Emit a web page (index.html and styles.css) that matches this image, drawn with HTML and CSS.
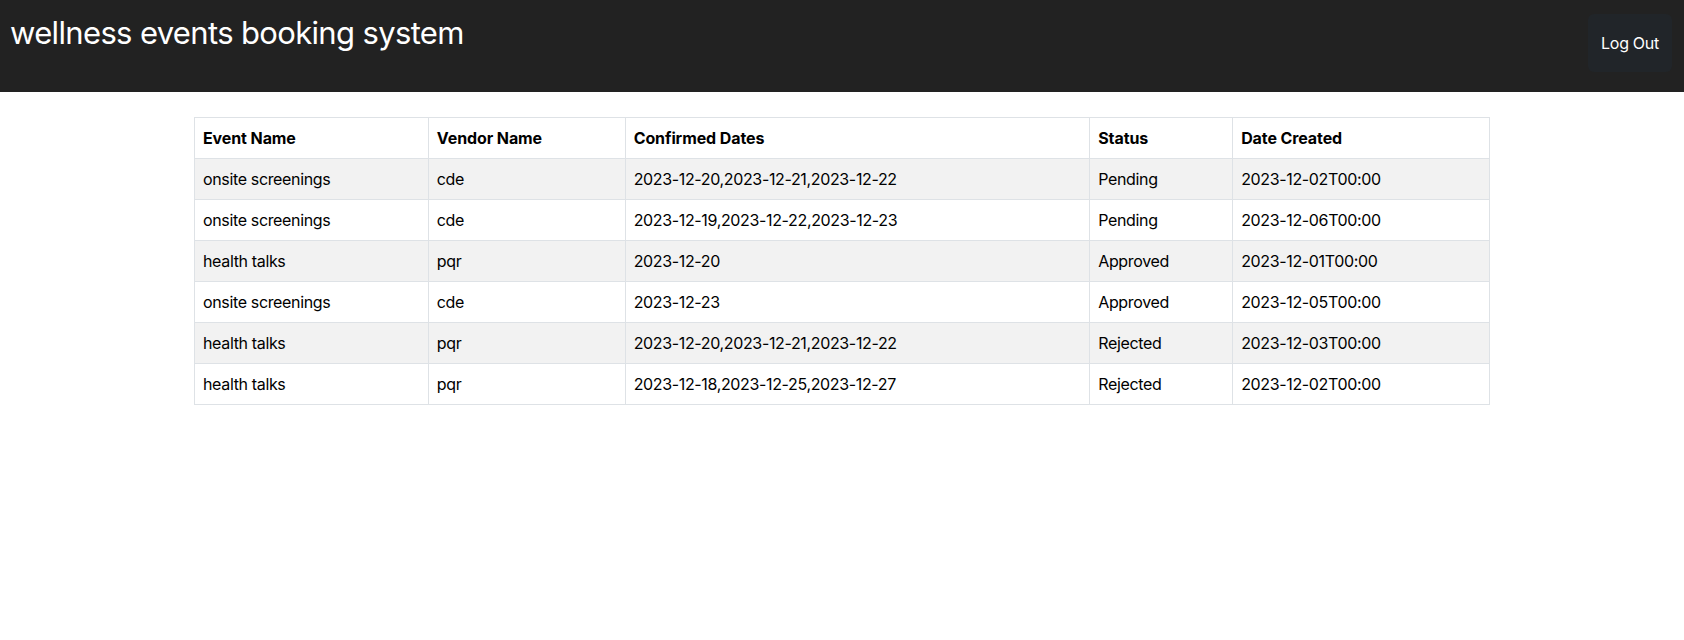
FILE: index.html
```html
<!DOCTYPE html>
<html lang="en">
<head>
<meta charset="utf-8">
<title>wellness events booking system</title>
<link rel="stylesheet" href="styles.css">
</head>
<body>
<header class="topbar">
  <h1 class="title">wellness events booking system</h1>
  <button class="logout">Log Out</button>
</header>
<main class="container">
  <table class="bookings">
    <colgroup>
      <col class="c1"><col class="c2"><col class="c3"><col class="c4"><col class="c5">
    </colgroup>
    <thead>
      <tr><th>Event Name</th><th>Vendor Name</th><th>Confirmed Dates</th><th>Status</th><th>Date Created</th></tr>
    </thead>
    <tbody>
      <tr><td>onsite screenings</td><td>cde</td><td>2023-12-20,2023-12-21,2023-12-22</td><td>Pending</td><td>2023-12-02T00:00</td></tr>
      <tr><td>onsite screenings</td><td>cde</td><td>2023-12-19,2023-12-22,2023-12-23</td><td>Pending</td><td>2023-12-06T00:00</td></tr>
      <tr><td>health talks</td><td>pqr</td><td>2023-12-20</td><td>Approved</td><td>2023-12-01T00:00</td></tr>
      <tr><td>onsite screenings</td><td>cde</td><td>2023-12-23</td><td>Approved</td><td>2023-12-05T00:00</td></tr>
      <tr><td>health talks</td><td>pqr</td><td>2023-12-20,2023-12-21,2023-12-22</td><td>Rejected</td><td>2023-12-03T00:00</td></tr>
      <tr><td>health talks</td><td>pqr</td><td>2023-12-18,2023-12-25,2023-12-27</td><td>Rejected</td><td>2023-12-02T00:00</td></tr>
    </tbody>
  </table>
</main>
</body>
</html>
```
FILE: styles.css
```css
* { box-sizing: border-box; }
body {
  margin: 0;
  font-family: Inter, "Noto Sans", sans-serif;
  font-size: 16px;
  color: #000;
  background: #fff;
}
.topbar {
  background: #222222;
  height: 92px;
  display: flex;
  justify-content: space-between;
  align-items: flex-start;
  padding: 0 12px 0 10px;
}
.title {
  margin: 13px 0 0 0;
  font-size: 31px;
  font-weight: 400;
  color: #fff;
  line-height: 40px;
  letter-spacing: -0.65px;
}
.logout {
  margin-top: 14px;
  width: 84px;
  height: 58px;
  background: #212529;
  border: none;
  border-radius: 6px;
  color: #fff;
  font-family: inherit;
  font-size: 16px;
  letter-spacing: -0.3px;
  padding: 0;
}
.container {
  width: 1296px;
  margin: 25px auto 0;
}
.bookings {
  width: 100%;
  border-collapse: collapse;
  border: 1px solid #dee2e6;
}
.c1 { width: 234px; }
.c2 { width: 197px; }
.c3 { width: 465px; }
.c4 { width: 143px; }
.c5 { width: 257px; }
.bookings th, .bookings td {
  border: 1px solid #dee2e6;
  padding: 0 8px;
  height: 41px;
  text-align: left;
  vertical-align: middle;
  line-height: 24px;
  letter-spacing: -0.35px;
}
.bookings th { font-weight: 700; letter-spacing: -0.1px; }
.bookings tbody tr:nth-child(odd) td { background: #f2f2f2; }
```
